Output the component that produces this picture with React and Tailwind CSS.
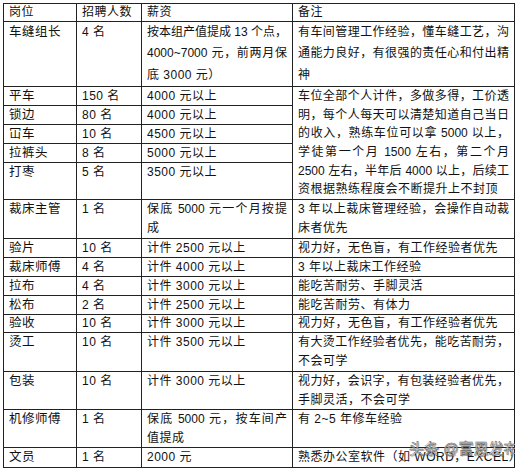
const rows = [
  { h: 65, a: '车缝组长', b: '4 名', c: ['按本组产值提成 13 个点，', '4000~7000 元，前两月保', '底 3000 元）'], d: ['有车间管理工作经验，懂车缝工艺，沟', '通能力良好，有很强的责任心和付出精', '神'] },
  { h: 19, n: 1, a: '平车', b: '150 名', c: ['4000 元以上'], d: ['车位全部个人计件，多做多得，工价透', '明，每个人每天可以清楚知道自己当日', '的收入，熟练车位可以拿 5000 以上，', '学徒第一个月 1500 左右，第二个月', '2500 左右，半年后 4000 以上，后续工', '资根据熟练程度会不断提升上不封顶'], span: 5, spanH: 113 },
  { h: 19, a: '锁边', b: '80 名', c: ['4000 元以上'], skip: true },
  { h: 19, a: '冚车', b: '10 名', c: ['4500 元以上'], skip: true },
  { h: 19, a: '拉裤头', b: '8 名', c: ['5000 元以上'], skip: true },
  { h: 37, a: '打枣', b: '5 名', c: ['3500 元以上'], skip: true, n: 2 },
  { h: 39, a: '裁床主管', b: '1 名', c: ['保底 5000 元一个月按提', '成'], d: ['3 年以上裁床管理经验，会操作自动裁', '床者优先'] },
  { h: 19, a: '验片', b: '10 名', c: ['计件 2500 元以上'], d: ['视力好，无色盲，有工作经验者优先'] },
  { h: 19, a: '裁床师傅', b: '4 名', c: ['计件 4000 元以上'], d: ['3 年以上裁床工作经验'] },
  { h: 19, a: '拉布', b: '4 名', c: ['计件 3000 元以上'], d: ['能吃苦耐劳、手脚灵活'] },
  { h: 19, a: '松布', b: '2 名', c: ['计件 2500 元以上'], d: ['能吃苦耐劳、有体力'] },
  { h: 18, a: '验收', b: '10 名', c: ['计件 3000 元以上'], d: ['视力好，无色盲，有工作经验者优先'] },
  { h: 39, a: '烫工', b: '10 名', c: ['计件 3500 元以上'], d: ['有大烫工作经验者优先，能吃苦耐劳，', '不会可学'] },
  { h: 38, a: '包装', b: '10 名', c: ['计件 3000 元以上'], d: ['视力好，会识字，有包装经验者优先，', '手脚灵活，不会可学'] },
  { h: 38, a: '机修师傅', b: '1 名', c: ['保底 5000 元，按车间产', '值提成'], d: ['有 2~5 年修车经验'] },
  { h: 20, a: '文员', b: '1 名', c: ['2000 元'], d: ['熟悉办公室软件（如 WORD，EXCEL）'] },
];

function Lines({ lines, lh }) {
  return lines.map((t, i) => (
    <div
      key={i}
      style={{ height: lh, lineHeight: lh + 'px' }}
      className={
        i < lines.length - 1
          ? 'whitespace-nowrap text-justify tracking-normal [text-align-last:justify]'
          : 'whitespace-nowrap'
      }
    >
      {t}
    </div>
  ));
}

const td = 'border border-[#222] p-0 px-[5px] align-top overflow-hidden';

export default function App() {
  return (
    <div className="relative h-[470px] w-[515px] overflow-hidden bg-white pl-[3px] pt-[3px] text-[12px] tracking-[0.5px] text-[#111] [font-family:'Liberation_Sans','Noto_Sans_CJK_SC',sans-serif]">
      <table className="w-[511px] table-fixed border-collapse">
        <colgroup>
          <col className="w-[73px]" />
          <col className="w-[65px]" />
          <col className="w-[151px]" />
          <col className="w-[222px]" />
        </colgroup>
        <tbody>
          <tr className="h-[18px]">
            {['岗位', '招聘人数', '薪资', '备注'].map((t) => (
              <td key={t} className={td}>
                <div className="h-[17px] whitespace-nowrap leading-[17px]">{t}</div>
              </td>
            ))}
          </tr>
          {rows.map((r) => {
            const n = r.n || Math.max(r.c.length, r.d ? r.d.length : 1, 1);
            const lh = (r.h - 1) / n;
            return (
              <tr key={r.a} style={{ height: r.h }}>
                <td className={td}>
                  <div className="text-[12.5px]">
                    <Lines lines={[r.a]} lh={lh} />
                  </div>
                </td>
                <td className={td}>
                  <Lines lines={[r.b]} lh={lh} />
                </td>
                <td className={td}>
                  <Lines lines={r.c} lh={lh} />
                </td>
                {!r.skip && (
                  <td className={td} rowSpan={r.span || 1}>
                    <Lines lines={r.d} lh={r.span ? (r.spanH - 1) / r.d.length : lh} />
                  </td>
                )}
              </tr>
            );
          })}
        </tbody>
      </table>
      <div className="absolute left-[409px] top-[440px] whitespace-nowrap text-[15px] leading-[18px] tracking-normal text-white/90 [-webkit-text-stroke:0.5px_#555] [text-shadow:1px_1px_1px_rgba(0,0,0,0.35)]">
        头条 @富恩发布
      </div>
    </div>
  );
}
